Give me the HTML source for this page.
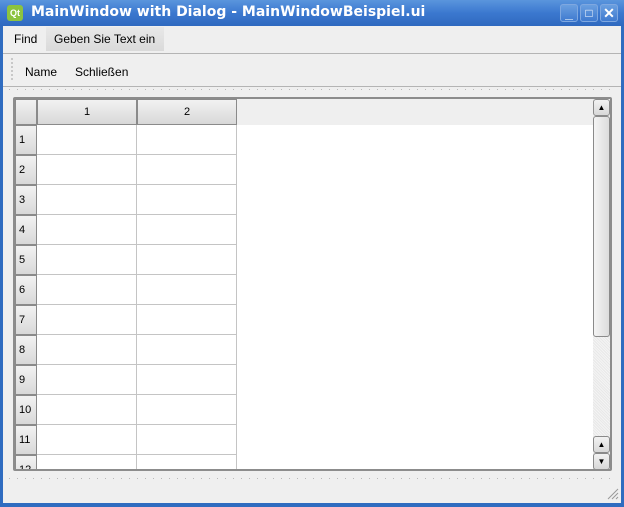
<!DOCTYPE html>
<html><head><style>
*{margin:0;padding:0;box-sizing:border-box}
body{width:624px;height:507px;overflow:hidden;background:#2f6cc0;font-family:"Liberation Sans",sans-serif;font-size:12px;color:#000;position:relative}
.abs{position:absolute}
#title{left:0;top:0;width:624px;height:26px;background:linear-gradient(#5a95dd,#3b78cf 50%,#2f69bf)}
#title .t{left:31px;top:4px;color:#fff;font-weight:bold;font-size:14px;font-family:"DejaVu Sans",sans-serif;letter-spacing:0}
.btn{top:4px;width:18px;height:18px;border:1px solid #7fa8e0;border-radius:3px;background:linear-gradient(#6a9fe0,#3f7ad0);color:#fff;font-weight:bold;text-align:center;line-height:16px;font-size:14px}
#client{left:3px;top:26px;width:618px;height:477px;background:#efefef}
.hdr{background:linear-gradient(#f2f2f2,#d8d8d8);border:1px solid #8a8a8a;text-align:center;font-size:11px}
.cell{border-right:1px solid #c4c4c4;border-bottom:1px solid #c4c4c4;background:#fff}
.dots{height:1px;background:repeating-linear-gradient(90deg,#b8b8b8 0 1px,transparent 1px 8px)}
</style></head><body>
<div id="title" class="abs">
 <div class="abs" style="left:7px;top:5px;width:16px;height:16px;background:#8cc33f;border-radius:3px;color:#fff;font-size:9px;font-weight:bold;line-height:16px;text-align:center">Qt</div>
 <div class="abs t">MainWindow with Dialog - MainWindowBeispiel.ui</div>
 <div class="abs btn" style="left:560px">_</div>
 <div class="abs btn" style="left:580px;font-size:12px">□</div>
 <div class="abs btn" style="left:600px">✕</div>
</div>
<div id="client" class="abs">
 <div class="abs" style="left:11px;top:6px;font-size:12px">Find</div>
 <div class="abs" style="left:43px;top:1px;width:118px;height:24px;background:linear-gradient(#e8e8e8,#dadada);"></div>
 <div class="abs" style="left:51px;top:6px">Geben Sie Text ein</div>
 <div class="abs" style="left:0;top:27px;width:618px;height:1px;background:#b4b4b4"></div>
 <div class="abs" style="left:8px;top:32px;width:2px;height:22px;background:repeating-linear-gradient(#c8c8c8 0 2px,transparent 2px 4px)"></div>
 <div class="abs" style="left:22px;top:39px">Name</div>
 <div class="abs" style="left:72px;top:39px">Schließen</div>
 <div class="abs" style="left:0;top:60px;width:618px;height:1px;background:#b4b4b4"></div>
 <div class="abs dots" style="left:6px;top:63px;width:606px"></div>
 <div class="abs dots" style="left:6px;top:452px;width:606px"></div>
 <svg class="abs" style="left:604px;top:462px" width="12" height="12"><path d="M11 1L1 11M11 5L5 11M11 9L9 11" stroke="#999" stroke-width="1"/></svg>
 <!-- table -->
 <div class="abs" style="left:10px;top:71px;width:599px;height:374px;border:2px solid #8c8c8c;border-radius:2px;background:#fff;overflow:hidden">
  <div class="abs" style="left:0;top:0;width:579px;height:26px;background:#efefef"></div>
  <div class="abs hdr" style="left:0;top:0;width:22px;height:26px"></div>
  <div class="abs hdr" style="left:22px;top:0;width:100px;height:26px;line-height:24px">1</div>
  <div class="abs hdr" style="left:122px;top:0;width:100px;height:26px;line-height:24px">2</div>
  <div id="rows"></div>
  <!-- scrollbar -->
  <div class="abs" style="left:578px;top:0;width:17px;height:370px;background:repeating-linear-gradient(45deg,#f4f4f4 0 1px,#e8e8e8 1px 2px)"></div>
  <div class="abs hdr" style="left:578px;top:0;width:17px;height:17px;border-radius:3px;line-height:15px;font-size:8px">▲</div>
  <div class="abs" style="left:578px;top:17px;width:17px;height:221px;border:1px solid #8a8a8a;border-radius:3px;background:linear-gradient(90deg,#f4f4f4,#dcdcdc)"></div>
  <div class="abs hdr" style="left:578px;top:337px;width:17px;height:17px;border-radius:3px;line-height:15px;font-size:8px">▲</div>
  <div class="abs hdr" style="left:578px;top:354px;width:17px;height:17px;border-radius:3px;line-height:15px;font-size:8px">▼</div>
 </div>
</div>
<script>
var h='';
for(var i=0;i<12;i++){var y=26+i*30;
h+='<div class="abs hdr" style="left:0;top:'+y+'px;width:22px;height:30px;text-align:left;padding-left:3px;line-height:28px">'+(i+1)+'</div>';
h+='<div class="abs cell" style="left:22px;top:'+y+'px;width:100px;height:30px"></div>';
h+='<div class="abs cell" style="left:122px;top:'+y+'px;width:100px;height:30px"></div>';}
document.getElementById('rows').outerHTML=h;
</script>
</body></html>
